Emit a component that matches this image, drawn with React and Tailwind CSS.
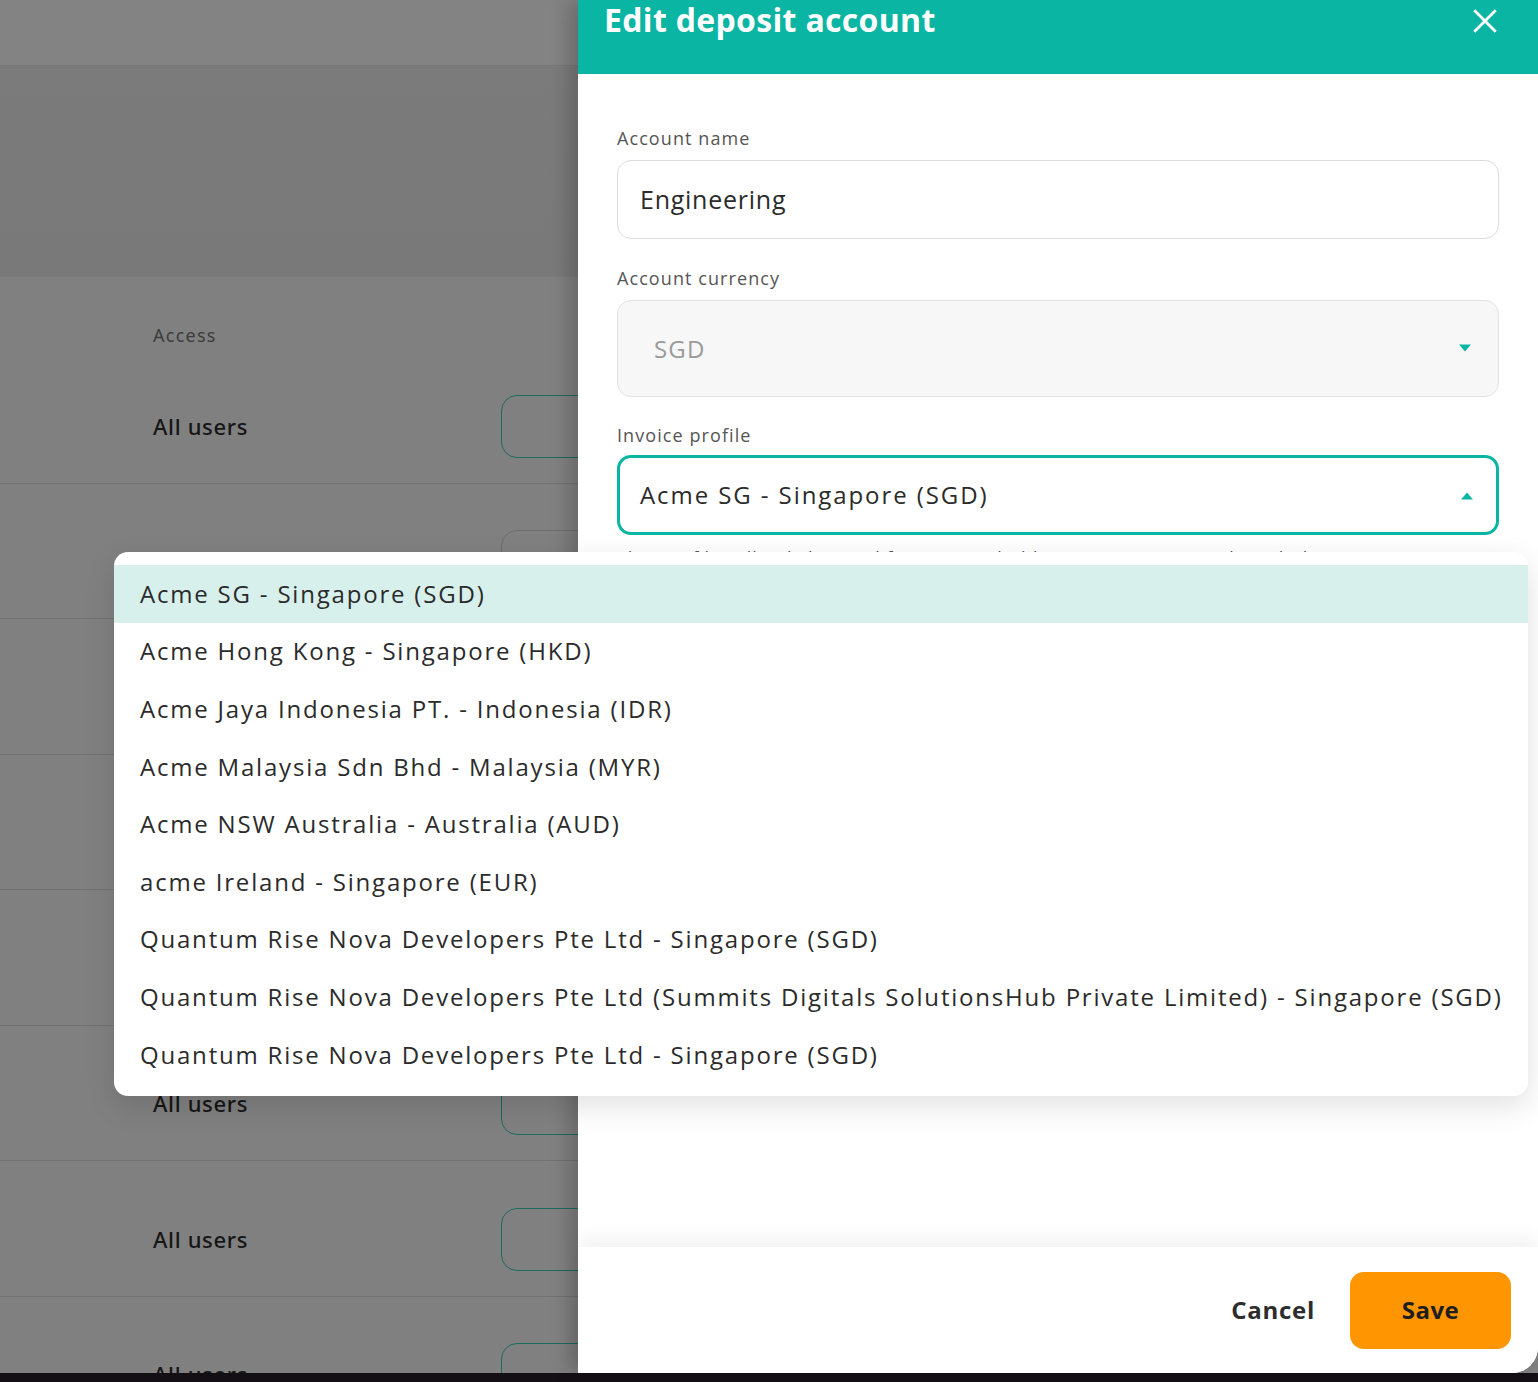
import React from 'react';

const profiles = [
    "Acme SG - Singapore (SGD)",
    "Acme Hong Kong - Singapore (HKD)",
    "Acme Jaya Indonesia PT. - Indonesia (IDR)",
    "Acme Malaysia Sdn Bhd - Malaysia (MYR)",
    "Acme NSW Australia - Australia (AUD)",
    "acme Ireland - Singapore (EUR)",
    "Quantum Rise Nova Developers Pte Ltd - Singapore (SGD)",
    "Quantum Rise Nova Developers Pte Ltd (Summits Digitals SolutionsHub Private Limited) - Singapore (SGD)",
    "Quantum Rise Nova Developers Pte Ltd - Singapore (SGD)",
];

function Caret({ up }) {
    return (
        <svg width="16" height="9" viewBox="0 0 16 9" className="shrink-0">
            {up ? <path d="M2 8.5 L8 1.5 L14 8.5 Z" fill="#0ab5a3" /> : <path d="M2 0.5 L8 7.5 L14 0.5 Z" fill="#0ab5a3" />}
        </svg>
    );
}

export default function App() {
    const rows = [0, 1, 2, 3, 4, 5, 6, 7];

    return (
        <div className="relative h-[1382px] w-full overflow-hidden bg-[#140f14]" style={{ fontFamily: '"Open Sans", sans-serif' }}>
            {/* page behind the overlay */}
            <div className="h-[1373px] bg-[#808080] overflow-hidden" style={{ fontFamily: '"Noto Sans", sans-serif' }}>
                <div className="h-[66px] bg-[#838383] border-b border-[#777]"></div>
                <div className="h-[211px] bg-gradient-to-b from-[#7b7b7b] to-[#797979]"></div>
                <div className="h-[71px] pl-[153px] pt-[46px] text-[18px] leading-[24px] tracking-[0.07em] text-[#3c3c3c]">Access</div>
                {rows.map((r) => (
                    <div key={r} className="h-[135.5px] border-b border-[#727272] flex items-center pt-[22px] pl-[153px]">
                        <span className="w-[348px] text-[22px] font-medium tracking-[0.03em] text-[#161616]">All users</span>
                        <div className={"h-[63px] w-[300px] rounded-2xl border " + (r === 1 ? "border-[#6e6e6e]" : "border-[#1d6b61]")}></div>
                    </div>
                ))}
            </div>

            {/* drawer */}
            <div className="absolute top-0 right-0 w-[960px] h-[1373px] bg-white rounded-br-[26px] flex flex-col shadow-[-10px_0_18px_rgba(0,0,0,0.18)]">
                <div className="h-[74px] shrink-0 bg-[#0ab5a3] flex items-start justify-between pl-[26px] pr-[40px]">
                    <h1 className="text-[32px] leading-[40px] font-bold text-white tracking-[0.01em]">Edit deposit account</h1>
                    <svg width="26" height="26" viewBox="0 0 24 24" className="mt-[8px]" fill="none" stroke="white" strokeWidth="2.6" strokeLinecap="square">
                        <path d="M3 3 L21 21 M21 3 L3 21" />
                    </svg>
                </div>

                <div className="flex-1 px-[39px] pt-[52px]">
                    <div className="text-[18px] leading-[24px] text-[#555] tracking-[0.06em]">Account name</div>
                    <div className="mt-[10px] h-[79px] rounded-[14px] border border-[#dcdcdc] flex items-center px-[22px] text-[25px] text-[#2b2b2b] tracking-[0.03em]">
                        Engineering
                    </div>

                    <div className="mt-[27px] text-[18px] leading-[24px] text-[#555] tracking-[0.06em]">Account currency</div>
                    <div className="mt-[10px] h-[97px] rounded-[14px] border border-[#e2e2e2] bg-[#f7f7f7] flex items-center justify-between pl-[36px] pr-[25px] text-[24px] text-[#9a9a9a] tracking-[0.05em]">
                        <span>SGD</span>
                        <Caret />
                    </div>

                    <div className="mt-[26px] text-[18px] leading-[24px] text-[#555] tracking-[0.06em]">Invoice profile</div>
                    <div className="mt-[8px] h-[80px] rounded-[14px] border-[3px] border-[#0ab5a3] flex items-center justify-between pl-[20px] pr-[21px] text-[24px] text-[#2b2b2b] tracking-[0.08em]">
                        <span>Acme SG - Singapore (SGD)</span>
                        <Caret up />
                    </div>
                    <p className="mt-[10px] text-[18px] text-[#555] tracking-[0.05em]">This profile will only be used for account holders as payments made with deposits.</p>
                </div>

                <div className="h-[126px] shrink-0 rounded-br-[26px] bg-white shadow-[0_-10px_18px_rgba(0,0,0,0.05)] flex items-center justify-end gap-[35px] pr-[27px]">
                    <button className="text-[24px] font-bold text-[#2d2d2d] tracking-[0.03em]">Cancel</button>
                    <button className="h-[77px] w-[161px] rounded-[14px] bg-[#ff9500] text-[24px] font-bold text-[#1e1e1e] tracking-[0.02em]">Save</button>
                </div>
            </div>

            {/* open invoice profile list */}
            <div className="absolute left-[114px] top-[552px] w-[1414px] rounded-[14px] bg-white py-[13px] shadow-[0_10px_30px_rgba(0,0,0,0.12)]">
                {profiles.map((p, i) => (
                    <div
                        key={i}
                        className={"h-[57.6px] flex items-center pl-[26px] text-[24px] text-[#2b2b2b] tracking-[0.075em] whitespace-nowrap " + (i === 0 ? "bg-[#d7f0ec]" : "")}
                    >
                        {p}
                    </div>
                ))}
            </div>
        </div>
    );
}
